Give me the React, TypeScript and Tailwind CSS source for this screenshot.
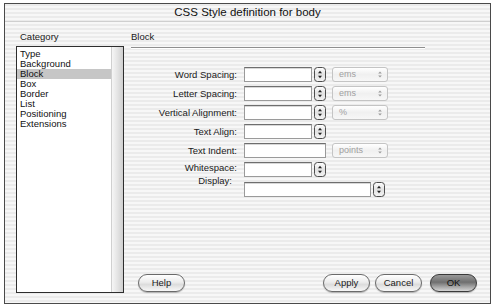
import React from "react";

const stripes =
  "bg-[repeating-linear-gradient(to_bottom,#ebebeb_0px,#ebebeb_2px,#f7f7f7_2px,#f7f7f7_4px)]";

function Stepper({ className = "" }: { className?: string }) {
  return (
    <svg width="12" height="15" viewBox="0 0 12 15" className={className}>
      <defs>
        <linearGradient id="stg" x1="0" y1="0" x2="0" y2="1">
          <stop offset="0" stopColor="#ffffff" />
          <stop offset="0.5" stopColor="#e2e2e2" />
          <stop offset="1" stopColor="#f4f4f4" />
        </linearGradient>
      </defs>
      <rect x="0.5" y="0.5" width="11" height="14" rx="3" fill="url(#stg)" stroke="#4d4d4d" />
      <path d="M4 6.2 L6 3.8 L8 6.2 Z" fill="#222" />
      <path d="M4 8.8 L6 11.2 L8 8.8 Z" fill="#222" />
    </svg>
  );
}

function Dropdown({ label }: { label: string }) {
  return (
    <div className="ml-[6px] flex h-[15px] w-[56px] items-center justify-between rounded-[3px] border border-[#c4c4c4] bg-[linear-gradient(to_bottom,#ffffff,#f0f0f0_50%,#f7f7f7)] pl-[6px] pr-[4px]">
      <span className="text-[9px] leading-none text-[#a0a0a0]">{label}</span>
      <svg width="6" height="9" viewBox="0 0 6 9">
        <path d="M1.2 3.6 L3 1.4 L4.8 3.6 Z" fill="#9a9a9a" />
        <path d="M1.2 5.4 L3 7.6 L4.8 5.4 Z" fill="#9a9a9a" />
      </svg>
    </div>
  );
}

function Input({ w }: { w: string }) {
  return (
    <div
      className={`${w} h-[15px] border border-[#9a9a9a] border-t-[#6e6e6e] bg-white shadow-[inset_0_1px_0_#d8d8d8]`}
    />
  );
}

function Label({ children, extra = "" }: { children: React.ReactNode; extra?: string }) {
  return (
    <div className={`w-[106px] shrink-0 text-right text-[9.5px] text-[#1a1a1a] ${extra}`}>
      {children}
    </div>
  );
}

function AquaButton({ label, primary = false, w = "w-[47px]" }: { label: string; primary?: boolean; w?: string }) {
  return (
    <div
      className={`${w} flex h-[18px] items-center justify-center rounded-full border text-[9.5px] leading-none shadow-[0_1px_1px_rgba(0,0,0,0.25)] ${
        primary
          ? "border-[#3a3a3a] bg-[linear-gradient(to_bottom,#9a9a9a,#6f6f6f_45%,#a8a8a8_75%,#d4d4d4)] text-[#111]"
          : "border-[#6a6a6a] bg-[linear-gradient(to_bottom,#ffffff,#ececec_45%,#dcdcdc_60%,#f8f8f8)] text-[#1a1a1a]"
      }`}
    >
      {label}
    </div>
  );
}

export default function App() {
  const items = ["Type", "Background", "Block", "Box", "Border", "List", "Positioning", "Extensions"];
  return (
    <div
      className="h-[308px] w-[495px] bg-white pl-[4px] pt-[3px]"
      style={{ fontFamily: '"Liberation Sans", Arial, sans-serif' }}
    >
      <div className={`flex h-[301px] w-[487px] flex-col border border-[#4a4a4a] ${stripes}`}>
        {/* title bar */}
        <div className="flex h-[18px] shrink-0 items-center justify-center border-b border-[#cfcfcf] text-[11.5px] text-[#111]">
          CSS Style definition for body
        </div>
        <div className="flex min-h-0 flex-1 pl-[11px] pt-[9px]">
          {/* left column */}
          <div className="flex w-[108px] shrink-0 flex-col">
            <div className="h-[12px] pl-[4px] text-[9.5px] leading-[12px] text-[#1a1a1a]">Category</div>
            <div className="mt-[3px] flex h-[247px] border border-[#2e2e2e] bg-white">
              <div className="flex-1 pt-[2px]">
                {items.map((it) => (
                  <div
                    key={it}
                    className={`h-[10px] pl-[3px] text-[9.5px] leading-[10px] text-[#111] ${
                      it === "Block" ? "bg-[#c6c6c6]" : ""
                    }`}
                  >
                    {it}
                  </div>
                ))}
              </div>
              <div className="w-[12px] border-l border-[#d0d0d0] bg-[linear-gradient(to_right,#f6f6f6,#e4e4e4_50%,#cfcfcf)]" />
            </div>
          </div>
          {/* right column */}
          <div className="ml-[7px] flex flex-1 flex-col pb-[11px] pr-[13px]">
            <div className="h-[17px] w-[294px] border-b border-[#8e8e8e] text-[9.5px] leading-[12px] text-[#1a1a1a] shadow-[0_1px_0_#ffffff]">
              Block
            </div>
            <div className="mt-[19px] flex flex-col gap-[4px]">
              <div className="flex items-center">
                <Label extra="leading-[12px]">Word Spacing:</Label>
                <div className="ml-[7px]" />
                <Input w="w-[68px]" />
                <Stepper className="ml-[2px]" />
                <Dropdown label="ems" />
              </div>
              <div className="flex items-center">
                <Label extra="leading-[12px]">Letter Spacing:</Label>
                <div className="ml-[7px]" />
                <Input w="w-[68px]" />
                <Stepper className="ml-[2px]" />
                <Dropdown label="ems" />
              </div>
              <div className="flex items-center">
                <Label extra="leading-[12px]">Vertical Alignment:</Label>
                <div className="ml-[7px]" />
                <Input w="w-[68px]" />
                <Stepper className="ml-[2px]" />
                <Dropdown label="%" />
              </div>
              <div className="flex items-center">
                <Label extra="leading-[12px]">Text Align:</Label>
                <div className="ml-[7px]" />
                <Input w="w-[68px]" />
                <Stepper className="ml-[2px]" />
              </div>
              <div className="flex items-center">
                <Label extra="leading-[12px]">Text Indent:</Label>
                <div className="ml-[7px]" />
                <Input w="w-[82px]" />
                <Dropdown label="points" />
              </div>
              <div className="flex items-center">
                <Label extra="leading-[8px] -mt-[3px]">Whitespace:</Label>
                <div className="ml-[7px]" />
                <Input w="w-[68px]" />
                <Stepper className="ml-[2px]" />
              </div>
              <div className="mt-[1px] flex items-start">
                <Label extra="leading-[8px] -mt-[5px] pr-[5px]">Display:</Label>
                <div className="ml-[7px]" />
                <Input w="w-[127px]" />
                <Stepper className="ml-[2px]" />
              </div>
            </div>
            <div className="flex-1" />
            <div className="flex items-center">
              <div className="ml-[7px]">
                <AquaButton label="Help" />
              </div>
              <div className="flex-1" />
              <AquaButton label="Apply" />
              <div className="ml-[5px]">
                <AquaButton label="Cancel" />
              </div>
              <div className="ml-[8px]">
                <AquaButton label="OK" primary />
              </div>
            </div>
          </div>
        </div>
      </div>
    </div>
  );
}
